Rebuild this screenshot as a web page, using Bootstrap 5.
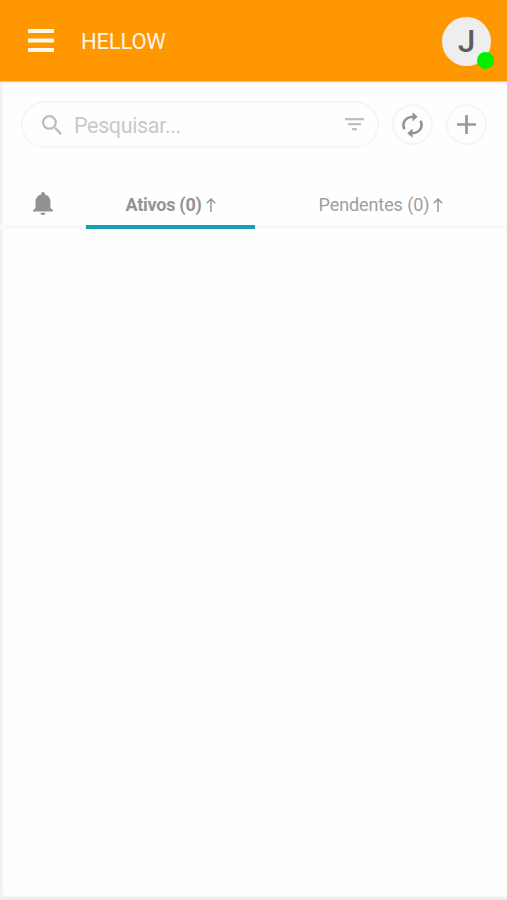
<!DOCTYPE html>
<html lang="pt-BR">
<head>
<meta charset="utf-8">
<meta name="viewport" content="width=device-width, initial-scale=1">
<title>Hellow</title>
<link href="https://cdn.jsdelivr.net/npm/bootstrap@5.3.0/dist/css/bootstrap.min.css" rel="stylesheet">
<style>
body { font-family: Roboto, "Liberation Sans", sans-serif; background: #fefefe; overflow: hidden; }
svg { display: block; flex: none; }
.app-bar { height: 82px; background: #ff9800; padding: 1px 16px 0 28px; border-bottom: 1px solid #ffc56e; }
.app-title { font-size: 22px; letter-spacing: -.2px; color: #fff6e6; margin-left: 27px; line-height: 1; padding-top: 2px; }
.avatar { width: 49px; height: 49px; background: #eee; color: #5c5c5c; font-size: 31px; font-weight: 500; line-height: 1; padding-top: 1px; }
.online-dot { width: 17px; height: 17px; background: #00ee00; right: -3px; bottom: -3px; }
.app-main { box-shadow: inset 4px 0 3px -2px #efefef, inset 0 -4px 3px -1px #ebebeb, inset 0 3px 2px -2px #eee; }
.search-row { padding: 19px 20px 0 21px; }
.search-box { width: 358px; height: 47px; border: 2px solid #f6f6f6; padding: 0 13px 0 19px; }
.search-hint { font-size: 21.5px; letter-spacing: -.35px; color: #c9c9c9; line-height: 1; margin-left: 12px; padding-top: 2px; }
.round-btn { width: 41px; height: 41px; border: 2px solid #f6f6f6; background: none; padding: 0; }
.tab-row { height: 48px; margin-top: 33px; border-bottom: 4px solid #f8f8f8; color: #9e9e9e; font-size: 18px; }
.tab-bell { width: 86px; padding: 1px 0 0 33px; }
.tab-item { height: 48px; line-height: 1; color: inherit; padding-top: 3px; border-bottom: 4px solid transparent; gap: 4px; letter-spacing: -.1px; }
.tab-on { width: 169px; border-color: #169fb4; color: #949494; font-weight: 700; letter-spacing: -.25px; }
</style>
</head>
<body class="vh-100 d-flex flex-column">
<header class="app-bar d-flex align-items-center flex-shrink-0">
  <svg width="26" height="24" viewBox="0 0 26 24" fill="#fffaf0"><path d="M0 0h26v4H0zM0 9.500h26v4H0zM0 19h26v4H0z"/></svg>
  <div class="app-title">HELLOW</div>
  <div class="avatar rounded-circle d-flex align-items-center justify-content-center ms-auto position-relative">J<span class="online-dot rounded-circle position-absolute"></span></div>
</header>
<main class="app-main flex-grow-1">
  <div class="search-row d-flex align-items-center">
    <div class="search-box rounded-pill d-flex align-items-center">
      <svg width="20" height="20" viewBox="3 3 17.5 17.5" fill="#bbb"><path d="M15.5 14h-.79l-.28-.27A6.470 6.470 0 0 0 16 9.500 6.500 6.500 0 1 0 9.500 16c1.610 0 3.090-.590 4.230-1.570l.270.280v.790l5 4.990L20.490 19l-4.990-5zm-6 0C7.010 14 5 11.990 5 9.500S7.010 5 9.500 5 14 7.010 14 9.500 11.990 14 9.500 14z"/></svg>
      <span class="search-hint">Pesquisar...</span>
      <svg class="ms-auto" width="19" height="13" viewBox="0 0 19 13" fill="#c0c0c0"><path d="M0 0h19v2.200H0zM3 5h13v2.200H3zM7 10h5v2.200H7z"/></svg>
    </div>
    <button class="round-btn rounded-circle d-flex align-items-center justify-content-center ms-auto" type="button" aria-label="Atualizar">
      <svg width="31" height="28" viewBox="0 0 24 24" preserveAspectRatio="none" fill="#929292"><path d="M12 6v3l4-4-4-4v3c-4.420 0-8 3.580-8 8 0 1.570.460 3.030 1.240 4.260L6.700 14.800A5.870 5.870 0 0 1 6 12c0-3.310 2.690-6 6-6zm6.760 1.740L17.300 9.200c.440.840.700 1.790.700 2.800 0 3.310-2.690 6-6 6v-3l-4 4 4 4v-3c4.420 0 8-3.580 8-8 0-1.570-.460-3.030-1.240-4.260z"/></svg>
    </button>
    <button class="round-btn rounded-circle d-flex align-items-center justify-content-center ms-auto" type="button" aria-label="Adicionar">
      <svg width="19" height="19" viewBox="0 0 18 18" fill="#999"><path d="M7.700 0h2.600v7.700H18v2.600h-7.700V18H7.700v-7.700H0V7.700h7.700z"/></svg>
    </button>
  </div>
  <nav class="tab-row d-flex">
    <div class="tab-bell d-flex align-items-center">
      <svg width="20" height="23" viewBox="4 2.500 16 19.500" preserveAspectRatio="none" fill="#929292"><path d="M12 22c1.100 0 2-.900 2-2h-4c0 1.100.890 2 2 2zm6-6v-5c0-3.070-1.640-5.640-4.500-6.320V4a1.500 1.500 0 0 0-3 0v.680C7.630 5.360 6 7.920 6 11v5l-2 2v1h16v-1l-2-2z"/></svg>
    </div>
    <a class="tab-item tab-on d-flex align-items-center justify-content-center text-decoration-none" href="#"><span>Ativos (0)</span>
      <svg width="10" height="14" viewBox="0 0 10 14" fill="none" stroke="#999" stroke-width="1.500"><path d="M5 14V1M.800 5.200L5 1l4.200 4.200"/></svg></a>
    <a class="tab-item flex-grow-1 d-flex align-items-center justify-content-center text-decoration-none" href="#"><span>Pendentes (0)</span>
      <svg width="10" height="14" viewBox="0 0 10 14" fill="none" stroke="#999" stroke-width="1.500"><path d="M5 14V1M.800 5.200L5 1l4.200 4.200"/></svg></a>
  </nav>
</main>
<script src="https://cdn.jsdelivr.net/npm/bootstrap@5.3.0/dist/js/bootstrap.bundle.min.js"></script>
</body>
</html>
